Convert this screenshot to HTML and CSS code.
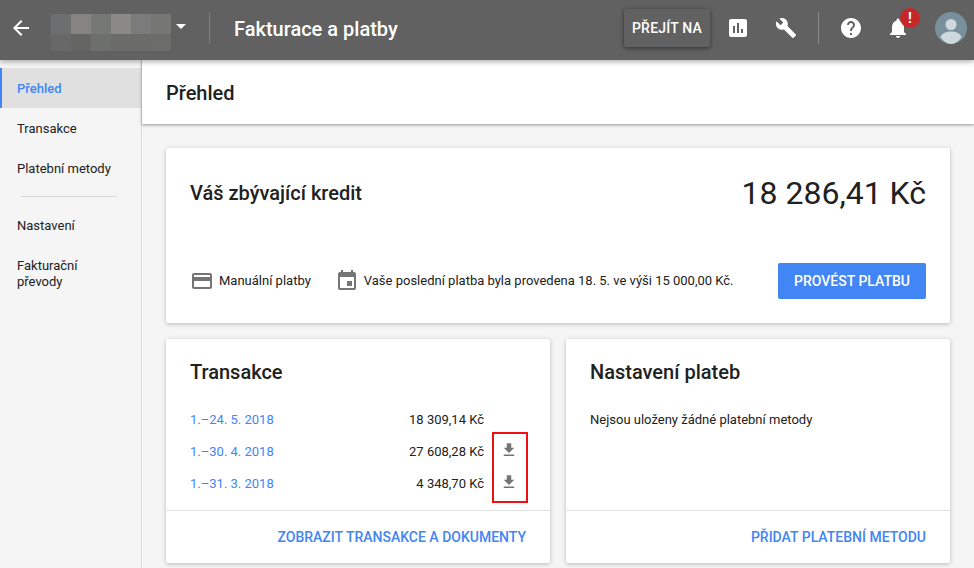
FILE: index.html
```html
<!DOCTYPE html>
<html lang="cs">
<head>
    <meta charset="UTF-8">
    <title>Fakturace a platby</title>
    <link rel="stylesheet" href="styles.css">
</head>
<body>

    <!-- Top bar -->
    <header class="topbar">
        <svg class="back" width="24" height="24" viewBox="0 0 24 24"><path fill="#fff" d="M20 11H7.83l5.59-5.59L12 4l-8 8 8 8 1.41-1.41L7.83 13H20z"/></svg>
        <div class="account">
            <i class="c1"></i><i class="c2"></i><i class="c3"></i><i class="c4"></i><i class="c5"></i><i class="c6"></i>
            <i class="c7"></i><i class="c8"></i><i class="c9"></i><i class="c10"></i><i class="c10"></i><i class="c11"></i>
        </div>
        <div class="caret"></div>
        <div class="vline first"></div>
        <div class="title">Fakturace a platby</div>
        <button class="goto">PŘEJÍT NA</button>
        <svg class="ico chart" width="24" height="24" viewBox="0 0 24 24"><path fill="#fff" d="M19 3H5c-1.1 0-2 .9-2 2v14c0 1.1.9 2 2 2h14c1.1 0 2-.9 2-2V5c0-1.100-.9-2-2-2zM9 17H7v-7h2v7zm4 0h-2V7h2v10zm4 0h-2v-4h2v4z"/></svg>
        <svg class="ico wrench" width="22" height="22" viewBox="0 0 24 24"><path fill="#fff" d="M22.700 19l-9.100-9.100c.9-2.300.4-5-1.500-6.900-2-2-5-2.400-7.400-1.300L9 6 6 9 1.600 4.700C.4 7.100.9 10.100 2.900 12.100c1.900 1.900 4.600 2.400 6.900 1.500l9.100 9.100c.4.400 1 .4 1.400 0l2.300-2.300c.5-.4.5-1.100.1-1.400z"/></svg>
        <div class="vline second"></div>
        <svg class="ico help" width="24" height="24" viewBox="0 0 24 24"><path fill="#fff" d="M12 2C6.480 2 2 6.480 2 12s4.480 10 10 10 10-4.480 10-10S17.520 2 12 2zm1 17h-2v-2h2v2zm2.070-7.750l-.9.920C13.450 12.900 13 13.500 13 15h-2v-.5c0-1.100.45-2.100 1.170-2.830l1.240-1.260c.37-.36.590-.86.590-1.410 0-1.100-.9-2-2-2s-2 .9-2 2H8c0-2.210 1.790-4 4-4s4 1.790 4 4c0 .88-.36 1.680-.93 2.250z"/></svg>
        <div class="bell-wrap">
            <svg width="24" height="24" viewBox="0 0 24 24"><path fill="#fff" d="M12 22c1.100 0 2-.9 2-2h-4c0 1.100.9 2 2 2zm6-6v-5c0-3.070-1.630-5.640-4.500-6.320V4c0-.83-.67-1.500-1.500-1.500s-1.500.67-1.500 1.500v.68C7.640 5.360 6 7.920 6 11v5l-2 2v1h16v-1l-2-2z"/></svg>
            <span class="badge">!</span>
        </div>
        <svg class="avatar" width="32" height="32" viewBox="0 0 32 32">
            <circle cx="16" cy="16" r="16" fill="#78909c"/>
            <circle cx="16" cy="12.500" r="5.500" fill="#cfd8dc"/>
            <path fill="#cfd8dc" d="M5.500 25c1.500-3.800 6-5.500 10.500-5.500S25 21.200 26.500 25C24 28.800 20.200 32 16 32S8 28.800 5.500 25z"/>
        </svg>
    </header>

    <div class="layout">

        <!-- Side menu -->
        <nav class="sidebar">
            <a class="active">Přehled</a>
            <a>Transakce</a>
            <a>Platební metody</a>
            <div class="side-divider"></div>
            <a>Nastavení</a>
            <a class="two-lines">Fakturační převody</a>
        </nav>

        <!-- Main content -->
        <main class="main">
            <div class="page-head">Přehled</div>

            <div class="cards">
                <section class="card credit">
                    <div class="credit-top">
                        <h2>Váš zbývající kredit</h2>
                        <div class="amount">18 286,41 Kč</div>
                    </div>
                    <div class="credit-bottom">
                        <svg class="small-ico" width="24" height="24" viewBox="0 0 24 24"><path fill="#757575" d="M20 4H4c-1.110 0-2 .89-2 2v12c0 1.110.89 2 2 2h16c1.110 0 2-.89 2-2V6c0-1.110-.89-2-2-2zm0 14H4v-6h16v6zm0-10H4V6h16v2z"/></svg>
                        <span class="manual">Manuální platby</span>
                        <svg class="small-ico" width="24" height="24" viewBox="0 0 24 24"><path fill="#757575" d="M17 12h-5v5h5v-5zM16 1v2H8V1H6v2H5c-1.110 0-2 .9-2 2v14c0 1.100.89 2 2 2h14c1.100 0 2-.9 2-2V5c0-1.100-.9-2-2-2h-1V1h-2zm3 18H5V8h14v11z"/></svg>
                        <span class="last-pay">Vaše poslední platba byla provedena 18. 5. ve výši 15 000,00 Kč.</span>
                        <button class="pay">PROVÉST PLATBU</button>
                    </div>
                </section>

                <div class="card-row">
                    <section class="card half">
                        <div class="half-body">
                            <h3>Transakce</h3>
                            <div class="tx">
                                <a>1.–24. 5. 2018</a>
                                <span>18 309,14 Kč</span>
                                <i class="no-dl"></i>
                            </div>
                            <div class="tx">
                                <a>1.–30. 4. 2018</a>
                                <span>27 608,28 Kč</span>
                                <svg width="18" height="18" viewBox="0 0 24 24"><path fill="#757575" d="M19 9h-4V3H9v6H5l7 7 7-7zM5 18v2h14v-2H5z"/></svg>
                            </div>
                            <div class="tx">
                                <a>1.–31. 3. 2018</a>
                                <span>4 348,70 Kč</span>
                                <svg width="18" height="18" viewBox="0 0 24 24"><path fill="#757575" d="M19 9h-4V3H9v6H5l7 7 7-7zM5 18v2h14v-2H5z"/></svg>
                            </div>
                            <div class="red-box"></div>
                        </div>
                        <div class="half-foot">ZOBRAZIT TRANSAKCE A DOKUMENTY</div>
                    </section>

                    <section class="card half">
                        <div class="half-body">
                            <h3>Nastavení plateb</h3>
                            <p class="none">Nejsou uloženy žádné platební metody</p>
                        </div>
                        <div class="half-foot">PŘIDAT PLATEBNÍ METODU</div>
                    </section>
                </div>
            </div>
        </main>
    </div>

</body>
</html>
```

FILE: styles.css
```css
html, body {
    margin: 0;
    padding: 0;
    height: 568px;
    overflow: hidden;
}

body {
    font-family: Roboto, "Liberation Sans", sans-serif;
    font-size: 13px;
    color: #212121;
    background-color: #f5f5f5;
}

/* Top bar */
.topbar {
    position: relative;
    z-index: 3;
    height: 60px;
    box-sizing: border-box;
    padding-bottom: 4px;
    display: flex;
    align-items: center;
    background-color: #616161;
    box-shadow: 0 2px 5px rgba(0, 0, 0, 0.3);
}

.back {
    margin-left: 9px;
    flex: none;
}

.account {
    margin-left: 18px;
    margin-top: 9px;
    width: 120px;
    height: 37px;
    display: grid;
    grid-template-columns: repeat(6, 20px);
    grid-template-rows: 20px 17px;
    flex: none;
}

.c1 { background-color: #6d6e6f; }
.c2 { background-color: #858480; }
.c3 { background-color: #767876; }
.c4 { background-color: #8a8985; }
.c5 { background-color: #7a7b7a; }
.c6 { background-color: #767675; }
.c7 { background-color: #686868; }
.c8 { background-color: #656563; }
.c9 { background-color: #6d6f6d; }
.c10 { background-color: #6b6b6a; }
.c11 { background-color: #6c6c6b; }

.caret {
    margin-left: 5px;
    margin-bottom: 3px;
    width: 0;
    height: 0;
    border-left: 5px solid transparent;
    border-right: 5px solid transparent;
    border-top: 5px solid #fff;
}

.vline {
    width: 1px;
    height: 32px;
    background-color: #7f7f7f;
    flex: none;
}

.vline.first {
    margin-left: 23px;
}

.title {
    margin-left: 24px;
    margin-top: 2px;
    font-size: 20px;
    font-weight: 500;
    color: #fff;
    flex: 1;
}

.goto {
    width: 86px;
    height: 38px;
    margin-right: 16px;
    padding: 0;
    border: none;
    border-radius: 2px;
    background-color: #616161;
    box-shadow: 0 1px 4px rgba(0, 0, 0, 0.5);
    color: #fff;
    font-family: inherit;
    font-size: 14px;
    font-weight: 500;
    letter-spacing: 0.2px;
}

.ico {
    flex: none;
}

.wrench {
    margin-left: 25px;
}

.vline.second {
    margin-left: 21px;
    background-color: #8a8a8a;
}

.help {
    margin-left: 20px;
}

.bell-wrap {
    position: relative;
    margin-left: 23px;
    margin-right: 1px;
    width: 24px;
    height: 24px;
    flex: none;
}

.badge {
    position: absolute;
    top: -8px;
    left: 14px;
    width: 20px;
    height: 20px;
    border-radius: 50%;
    background-color: #c62828;
    color: #fff;
    font-size: 14px;
    font-weight: 700;
    line-height: 20px;
    text-align: center;
}

.avatar {
    margin-left: 24px;
    margin-right: 7px;
    flex: none;
}

/* Layout */
.layout {
    display: flex;
    height: 508px;
}

.sidebar {
    width: 141px;
    flex: none;
    padding-top: 8px;
    border-right: 1px solid #dadada;
    background-color: #f5f5f5;
}

.sidebar a {
    display: block;
    height: 40px;
    padding-left: 17px;
    line-height: 42px;
    color: #212121;
}

.sidebar a.active {
    padding-left: 15px;
    border-left: 2px solid #4285f4;
    background-color: #e0e0e0;
    color: #4285f4;
    font-weight: 500;
}

.sidebar a.two-lines {
    height: auto;
    width: 90px;
    padding-top: 13px;
    line-height: 16px;
}

.side-divider {
    height: 1px;
    margin: 8px 24px 8px 21px;
    background-color: #d6d6d6;
}

.main {
    flex: 1;
    min-width: 0;
}

.page-head {
    position: relative;
    z-index: 2;
    height: 64px;
    padding-left: 24px;
    line-height: 66px;
    font-size: 20px;
    font-weight: 500;
    background-color: #fff;
    box-shadow: 0 1px 3px rgba(0, 0, 0, 0.4);
}

.cards {
    padding: 24px 24px 0;
}

.card {
    background-color: #fff;
    border-radius: 2px;
    box-shadow: 0 1px 4px rgba(0, 0, 0, 0.25);
}

/* Credit card */
.credit {
    height: 175px;
    padding: 0 24px;
    box-sizing: border-box;
    display: flex;
    flex-direction: column;
    justify-content: space-between;
}

.credit-top {
    display: flex;
    justify-content: space-between;
    align-items: center;
    padding-top: 24px;
}

.credit-top h2 {
    margin: 0;
    font-size: 20px;
    font-weight: 500;
}

.amount {
    font-size: 32px;
    font-weight: 400;
    line-height: 42px;
}

.credit-bottom {
    display: flex;
    align-items: center;
    padding-bottom: 24px;
}

.small-ico {
    flex: none;
}

.manual {
    margin-left: 5px;
    margin-right: 24px;
    margin-bottom: 2px;
}

.last-pay {
    margin-left: 5px;
    margin-bottom: 2px;
    flex: 1;
}

.pay {
    width: 148px;
    height: 36px;
    padding: 0;
    border: none;
    border-radius: 2px;
    background-color: #4285f4;
    color: #fff;
    font-family: inherit;
    font-size: 14px;
    font-weight: 500;
}

/* Bottom cards */
.card-row {
    display: flex;
    gap: 16px;
    margin-top: 16px;
}

.half {
    flex: 1;
    height: 224px;
    display: flex;
    flex-direction: column;
}

.half-body {
    position: relative;
    flex: 1;
    padding: 0 24px;
}

.half-body h3 {
    margin: 0;
    padding-top: 21px;
    padding-bottom: 20px;
    font-size: 20px;
    line-height: 24px;
    font-weight: 500;
}

.tx {
    display: flex;
    align-items: center;
    height: 32px;
    padding-right: 8px;
}

.tx a {
    color: #4285f4;
    flex: 1;
    margin-bottom: 2px;
}

.tx span {
    margin-bottom: 2px;
}

.tx svg, .tx .no-dl {
    display: block;
    flex: none;
    width: 18px;
    height: 18px;
    margin-left: 16px;
    margin-bottom: 5px;
}

.red-box {
    position: absolute;
    left: 326px;
    top: 93px;
    width: 32px;
    height: 67px;
    border: 2px solid #ee1111;
}

.none {
    margin: 0;
    line-height: 32px;
}

.half-foot {
    height: 52px;
    padding-right: 24px;
    border-top: 1px solid #e0e0e0;
    text-align: right;
    line-height: 52px;
    color: #4285f4;
    font-size: 14px;
    font-weight: 500;
}
```
